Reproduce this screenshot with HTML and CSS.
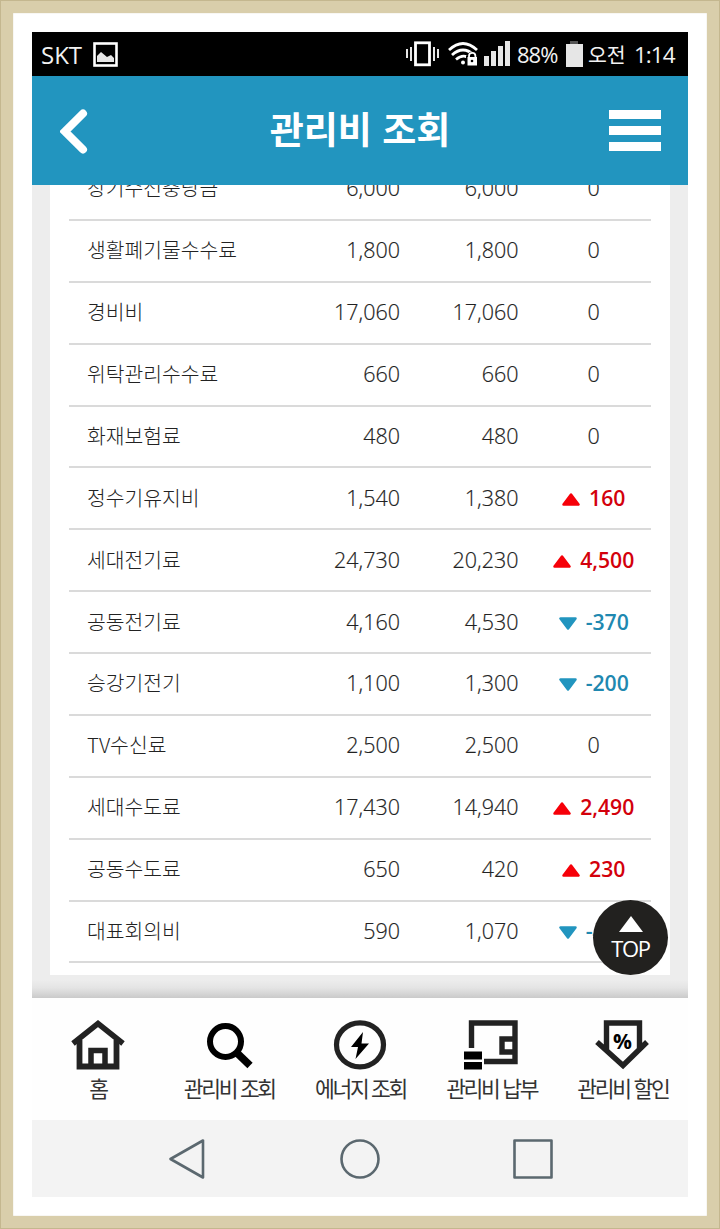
FILE: index.html
```
<!DOCTYPE html>
<html lang="ko">
<head>
    <meta charset="UTF-8">
    <meta name="viewport" content="width=device-width, initial-scale=1.0">
    <title>관리비 조회</title>
    <link rel="stylesheet" href="styles.css">
</head>
<body>
<div class="frame">
    <div class="phone">
        <!-- Status bar -->
        <div class="status">
            <span class="carrier">SKT</span>
            <svg width="25" height="25" viewBox="0 0 25 25"><rect x="1.5" y="1.5" width="22" height="22" fill="none" stroke="#fff" stroke-width="2.6"/><path d="M4 20v-6l4-4 6 5 4-2 3 3v4z" fill="#e6e6e6"/></svg>
            <svg class="signals" width="104" height="26" viewBox="0 0 104 26">
                <g fill="none" stroke="#fff">
                    <rect x="9.5" y="1.8" width="14" height="22" stroke-width="2.8"/>
                    <path d="M1 8v9M5 6v14M28 6v14M32 8v9" stroke-width="1.8"/>
                    <path d="M43 9Q57 -4 71 9M46 14Q57 4 68 14M50 18.500Q56 13.500 61 16" stroke-width="2.8"/>
                </g>
                <path d="M60 25V14.500h2q0-4 4.500-4t4.500 4h1V25z" fill="#000"/>
                <path d="M63 17v-2q0-3.200 3.200-3.200T69.400 15v2" fill="none" stroke="#fff" stroke-width="1.8"/>
                <circle cx="57" cy="21.500" r="2" fill="#fff"/>
                <rect x="61.500" y="16" width="9.500" height="8.500" fill="#fff"/>
                <circle cx="66" cy="20" r="1.300" fill="#000"/>
                <path d="M78 15h5v10h-5zM85 10h5v15h-5zM92 5h5v20h-5zM99 0h5v25h-5z" fill="#e6e6e6"/>
            </svg>
            <span class="percent">88%</span>
            <svg width="17" height="26" viewBox="0 0 17 26"><path d="M4 0h8v3H4z" fill="#555"/><path d="M0 3h17v23H0z" fill="#e6e6e6"/></svg>
            <span class="ampm">오전</span>
            <span class="clock">1:14</span>
        </div>

        <!-- Title bar -->
        <header class="header">
            <svg width="28" height="46" viewBox="0 0 28 46"><path d="M23 5.500 5 23.500l18 18" fill="none" stroke="#fff" stroke-width="8" stroke-linecap="round"/></svg>
            <h1>관리비 조회</h1>
            <svg width="52" height="41" viewBox="0 0 52 41"><path d="M0 0h52v9H0zM0 16h52v9H0zM0 32h52v9H0z" fill="#fff"/></svg>
        </header>

        <!-- Fee list, scrolled to the end -->
        <main class="content">
            <div class="card">
                <div class="row"><span class="name">장기수선충당금</span><span class="num">6,000</span><span class="num">6,000</span><span class="diff">0</span></div>
                <div class="row"><span class="name">생활폐기물수수료</span><span class="num">1,800</span><span class="num">1,800</span><span class="diff">0</span></div>
                <div class="row"><span class="name">경비비</span><span class="num">17,060</span><span class="num">17,060</span><span class="diff">0</span></div>
                <div class="row"><span class="name">위탁관리수수료</span><span class="num">660</span><span class="num">660</span><span class="diff">0</span></div>
                <div class="row"><span class="name">화재보험료</span><span class="num">480</span><span class="num">480</span><span class="diff">0</span></div>
                <div class="row"><span class="name">정수기유지비</span><span class="num">1,540</span><span class="num">1,380</span><span class="diff up"><svg class="arrow" viewBox="0 0 18 13"><path d="M9 1.500 16.500 11.500h-15z"/></svg>160</span></div>
                <div class="row"><span class="name">세대전기료</span><span class="num">24,730</span><span class="num">20,230</span><span class="diff up"><svg class="arrow" viewBox="0 0 18 13"><path d="M9 1.500 16.500 11.500h-15z"/></svg>4,500</span></div>
                <div class="row"><span class="name">공동전기료</span><span class="num">4,160</span><span class="num">4,530</span><span class="diff down"><svg class="arrow" viewBox="0 0 18 13"><path d="M1.500 1.500h15L9 11.500z"/></svg>-370</span></div>
                <div class="row"><span class="name">승강기전기</span><span class="num">1,100</span><span class="num">1,300</span><span class="diff down"><svg class="arrow" viewBox="0 0 18 13"><path d="M1.500 1.500h15L9 11.500z"/></svg>-200</span></div>
                <div class="row"><span class="name">TV수신료</span><span class="num">2,500</span><span class="num">2,500</span><span class="diff">0</span></div>
                <div class="row"><span class="name">세대수도료</span><span class="num">17,430</span><span class="num">14,940</span><span class="diff up"><svg class="arrow" viewBox="0 0 18 13"><path d="M9 1.500 16.500 11.500h-15z"/></svg>2,490</span></div>
                <div class="row"><span class="name">공동수도료</span><span class="num">650</span><span class="num">420</span><span class="diff up"><svg class="arrow" viewBox="0 0 18 13"><path d="M9 1.500 16.500 11.500h-15z"/></svg>230</span></div>
                <div class="row"><span class="name">대표회의비</span><span class="num">590</span><span class="num">1,070</span><span class="diff down"><svg class="arrow" viewBox="0 0 18 13"><path d="M1.500 1.500h15L9 11.500z"/></svg>-480</span></div>
            </div>
            <a class="top">
                <svg width="24" height="16" viewBox="0 0 24 16"><path d="M12 0l12 16H0z" fill="#fff"/></svg>
                <span>TOP</span>
            </a>
        </main>

        <!-- Bottom tabs -->
        <nav class="tabs">
            <a class="tab">
                <svg width="54" height="50" viewBox="0 0 54 50" fill="none" stroke="#222"><path d="M2 23.500 27 3.500l25 20" stroke-width="5.500"/><path d="M8.500 20v26.500h37V20" stroke-width="5.800"/><path d="M20 46V30.500h14V46" stroke-width="5.500"/></svg>
                <span>홈</span>
            </a>
            <a class="tab">
                <svg width="54" height="50" viewBox="0 0 54 50" fill="none" stroke="#000"><circle cx="23.500" cy="21.500" r="15.500" stroke-width="6"/><path d="M34 32l14 13.500" stroke-width="7.500"/></svg>
                <span>관리비 조회</span>
            </a>
            <a class="tab">
                <svg width="54" height="50" viewBox="0 0 54 50"><ellipse cx="27" cy="24.800" rx="23.500" ry="22" fill="none" stroke="#222" stroke-width="5.200"/><path d="M30 12 18 27h7l-2.500 12L36 23.500h-7.500z" fill="#000"/></svg>
                <span>에너지 조회</span>
            </a>
            <a class="tab">
                <svg width="54" height="50" viewBox="0 0 54 50"><path d="M7.500 28V3h43.500v38.500H20M51 19H38v13H51" fill="none" stroke="#222" stroke-width="5.400"/><path d="M0 31.500h18v8H0zM0 42h18v7.500H0z" fill="#000"/></svg>
                <span>관리비 납부</span>
            </a>
            <a class="tab">
                <svg width="54" height="50" viewBox="0 0 54 50"><path d="M11.500 30V3h33v27M2 22l26 23.500L52 22" fill="none" stroke="#222" stroke-width="5.400"/><text class="pct" x="27.500" y="29" text-anchor="middle">%</text></svg>
                <span>관리비 할인</span>
            </a>
        </nav>

        <!-- Android navigation keys -->
        <div class="keys">
            <svg viewBox="0 0 40 40"><path d="M36 1.500v37L3.500 20z"/></svg>
            <svg viewBox="0 0 40 40"><circle cx="20" cy="20" r="18.500"/></svg>
            <svg viewBox="0 0 40 40"><path d="M1.500 1.500h37v37h-37z"/></svg>
        </div>
    </div>
</div>
</body>
</html>
```
FILE: styles.css
```
* {
    box-sizing: border-box;
}
body {
    margin: 0;
    background: #fff;
    font-family: "Noto Sans CJK KR", sans-serif;
}
svg {
    display: block;
    flex: none;
}
.frame {
    height: 1229px;
    padding: 19px;
    border: 13px solid #d9ceab;
    box-shadow: inset 0 0 1px #b9ac85;
    outline: 1px solid #c4b78f;
    outline-offset: -1px;
}
.phone {
    display: flex;
    flex-direction: column;
    height: 1165px;
    overflow: hidden;
}

/* status bar */
.status {
    display: flex;
    align-items: center;
    height: 44px;
    padding-left: 9px;
    background: #000;
    color: #f2f2f2;
    font-family: "Open Sans", "Noto Sans CJK KR", sans-serif;
    font-size: 22px;
    white-space: nowrap;
}
.carrier {
    width: 52px;
    font-size: 24px;
}
.signals {
    margin: 0 7px 0 288px;
}
.percent {
    width: 49px;
    letter-spacing: -1px;
}
.ampm {
    width: 46px;
    margin-left: 5px;
    font-family: "Noto Sans CJK KR", sans-serif;
    font-size: 20.5px;
}
.clock {
    font-size: 22.5px;
    letter-spacing: -1px;
}

/* header */
.header {
    display: flex;
    align-items: center;
    justify-content: space-between;
    flex: none;
    height: 109px;
    padding: 0 27px 0 28px;
    background: #2295bf;
}
.header h1 {
    margin: 0 0 5px 23px;
    color: #fff;
    font-size: 37px;
    font-weight: 700;
    line-height: 50px;
}

/* fee list */
.content {
    position: relative;
    flex: none;
    height: 813px;
    padding: 0 18px;
    overflow: hidden;
    background: linear-gradient(#ededed 0, #ededed 795px, #e4e4e4 803px, #cacaca 813px);
}
.card {
    height: 816px;
    margin-top: -26px;
    padding: 0 19px;
    background: #fff;
}
.row {
    display: grid;
    grid-template-columns: 213px 118px 118.5px 1fr;
    align-items: center;
    height: 61.88px;
    padding-bottom: 1px;
    border-bottom: 2px solid #dadada;
    color: #222;
    font-family: "Open Sans", "Noto Sans CJK KR", sans-serif;
    font-size: 21.5px;
    font-weight: 300;
    line-height: 30px;
    -webkit-text-stroke: 0.2px;
}
.name {
    padding: 0 0 2px 18px;
    font-family: "Noto Sans CJK KR", sans-serif;
    font-size: 20.4px;
    white-space: nowrap;
    -webkit-text-stroke: 0;
}
.num {
    text-align: right;
}
.diff {
    display: flex;
    align-items: center;
    justify-content: center;
    gap: 9px;
    padding-left: 18px;
}
.up,
.down {
    font-size: 21.2px;
    font-weight: 600;
    -webkit-text-stroke: 0;
}
.up {
    color: #d3000b;
}
.down {
    color: #2088b0;
}
.arrow {
    width: 18px;
    height: 13px;
    margin-top: 3px;
    fill: #f60009;
    stroke: #f60009;
    stroke-width: 2.5;
    stroke-linejoin: round;
}
.down .arrow {
    fill: #2295bf;
    stroke: #2295bf;
}
.top {
    position: absolute;
    right: 20px;
    bottom: 23px;
    display: flex;
    flex-direction: column;
    align-items: center;
    width: 75px;
    height: 75px;
    padding-top: 16px;
    border-radius: 50%;
    background: #22211f;
    color: #fff;
    font-family: "Open Sans", sans-serif;
    font-size: 22px;
    font-weight: 500;
    letter-spacing: -1.4px;
    line-height: 32px;
}

/* bottom tabs */
.tabs {
    display: grid;
    grid-template-columns: repeat(5, 1fr);
    flex: none;
    height: 122px;
    padding-top: 22px;
    background: #fefefe;
}
.tab {
    display: flex;
    flex-direction: column;
    align-items: center;
    color: #333;
    font-size: 21.5px;
    letter-spacing: -2.3px;
    line-height: 30px;
    white-space: nowrap;
}
.tab span {
    margin-top: 3px;
    padding-left: 1px;
}
.pct {
    font: 700 21px "Open Sans", sans-serif;
    letter-spacing: 0;
}

/* navigation keys */
.keys {
    display: flex;
    align-items: center;
    justify-content: center;
    gap: 133px;
    flex: 1;
    background: #f3f3f3;
}
.keys svg {
    width: 40px;
    height: 40px;
    fill: none;
    stroke: #5b686f;
    stroke-width: 2.6;
    stroke-linejoin: round;
}
```
